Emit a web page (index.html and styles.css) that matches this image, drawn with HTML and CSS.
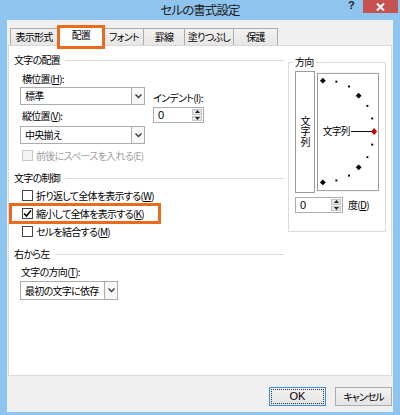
FILE: index.html
```html
<!DOCTYPE html>
<html lang="ja">
<head>
	<meta charset="UTF-8">
	<title>セルの書式設定</title>
	<link rel="stylesheet" href="styles.css">
</head>
<body>
<div class="window">
	<div class="titlebar">
		<div class="title">セルの書式設定</div>
		<div class="controls">
			<span class="help">?</span>
			<span class="close"><svg width="9" height="8" viewBox="0 0 9 8"><path d="M1 0.5 L8 7.5 M8 0.5 L1 7.5" stroke="#fff" stroke-width="2"/></svg></span>
		</div>
	</div>
	<div class="dialog">
		<ul class="tabs">
			<li class="tab t1">表示形式</li>
			<li class="tab t2 on">配置</li>
			<li class="tab t3">フォント</li>
			<li class="tab t4">罫線</li>
			<li class="tab t5">塗りつぶし</li>
			<li class="tab t6">保護</li>
		</ul>
		<div class="panel">
			<div class="left">
				<div class="group"><span>文字の配置</span></div>
				<div class="align">
					<div class="align-main">
						<div class="label">横位置(<u>H</u>):</div>
						<div class="combo"><span class="val">標準</span><span class="drop"><svg width="7" height="5" viewBox="0 0 7 5"><path d="M0.5 0.5 L3.5 3.5 L6.5 0.5" fill="none" stroke="#333" stroke-width="1.3"/></svg></span></div>
						<div class="label label2">縦位置(<u>V</u>):</div>
						<div class="combo combo2"><span class="val">中央揃え</span><span class="drop"><svg width="7" height="5" viewBox="0 0 7 5"><path d="M0.5 0.5 L3.5 3.5 L6.5 0.5" fill="none" stroke="#333" stroke-width="1.3"/></svg></span></div>
					</div>
					<div class="indent">
						<div class="label dim">インデント(I):</div>
						<div class="spin">
							<span class="val">0</span>
							<span class="arrows">
								<span class="arr"><svg width="5" height="3" viewBox="0 0 5 3"><path d="M0 3 L2.5 0 L5 3Z" fill="#222"/></svg></span>
								<span class="arr"><svg width="5" height="3" viewBox="0 0 5 3"><path d="M0 0 L2.5 3 L5 0Z" fill="#222"/></svg></span>
							</span>
						</div>
					</div>
				</div>
				<div class="check off"><span class="box"></span><span>前後にスペースを入れる(E)</span></div>

				<div class="group g2"><span>文字の制御</span></div>
				<div class="check"><span class="box"></span><span>折り返して全体を表示する(<u>W</u>)</span></div>
				<div class="check shown"><span class="box"><svg width="9" height="9" viewBox="0 0 9 9"><path d="M1 4.5 L3.5 7 L8 1.5" fill="none" stroke="#000" stroke-width="1.6"/></svg></span><span>縮小して全体を表示する(<u>K</u>)</span></div>
				<div class="check"><span class="box"></span><span>セルを結合する(<u>M</u>)</span></div>

				<div class="group g3"><span>右から左</span></div>
				<div class="label label3">文字の方向(<u>T</u>):</div>
				<div class="combo combo3"><span class="val">最初の文字に依存</span><span class="drop"><svg width="7" height="5" viewBox="0 0 7 5"><path d="M0.5 0.5 L3.5 3.5 L6.5 0.5" fill="none" stroke="#333" stroke-width="1.3"/></svg></span></div>
			</div>

			<div class="right">
				<div class="orient">
					<div class="orient-title">方向</div>
					<div class="orient-boxes">
						<div class="vtext">文字列</div>
						<svg class="dial" width="64" height="122" viewBox="0 0 64 122">
							<rect x="0.5" y="0.5" width="63" height="121" fill="#fff" stroke="#9a9a9a"/>
							<g fill="#000">
								<path d="M6 5 L9 8 L6 11 L3 8Z"/>
								<rect x="19" y="8" width="2" height="2"/>
								<rect x="32" y="13" width="2" height="2"/>
								<path d="M43 20.5 L46 23.5 L43 26.5 L40 23.5Z"/>
								<rect x="51" y="33" width="2" height="2"/>
								<rect x="56" y="46" width="2" height="2"/>
								<rect x="56" y="73" width="2" height="2"/>
								<rect x="51" y="86" width="2" height="2"/>
								<path d="M43 94.5 L46 97.5 L43 100.5 L40 97.5Z"/>
								<rect x="32" y="105" width="2" height="2"/>
								<rect x="19" y="110" width="2" height="2"/>
								<path d="M6 110 L9 113 L6 116 L3 113Z"/>
							</g>
							<text class="dial-text" x="6" y="64">文字列</text>
							<line x1="35" y1="60.5" x2="57" y2="60.5" stroke="#000"/>
							<path d="M59 57.5 L61.5 60.5 L59 63.5 L56.5 60.5Z" fill="#e00000" stroke="#900"/>
						</svg>
					</div>
					<div class="deg">
						<div class="spin spin-deg">
							<span class="val">0</span>
							<span class="arrows">
								<span class="arr"><svg width="5" height="3" viewBox="0 0 5 3"><path d="M0 3 L2.5 0 L5 3Z" fill="#222"/></svg></span>
								<span class="arr"><svg width="5" height="3" viewBox="0 0 5 3"><path d="M0 0 L2.5 3 L5 0Z" fill="#222"/></svg></span>
							</span>
						</div>
						<span class="deg-label">度(<u>D</u>)</span>
					</div>
				</div>
			</div>
		</div>
		<div class="buttons">
			<div class="btn ok">OK</div>
			<div class="btn">キャンセル</div>
		</div>
	</div>
</div>
</body>
</html>
```

FILE: styles.css
```css
* {
	margin: 0;
	padding: 0;
	box-sizing: border-box;
	list-style: none;
}
body {
	width: 400px;
	height: 415px;
	overflow: hidden;
	font-family: "Noto Sans CJK JP", "Noto Sans", sans-serif;
	font-size: 10px;
	letter-spacing: -0.7px;
	font-feature-settings: "palt";
	white-space: nowrap;
	color: #000;
}
u {
	text-decoration-thickness: 1px;
	text-underline-offset: 1px;
}
.window {
	height: 415px;
	background: #8fc4ef;
}

/* title bar */
.titlebar {
	height: 20px;
	display: grid;
	grid-template-columns: 1fr auto 1fr;
}
.title {
	grid-column: 2;
	font-size: 12.5px;
	letter-spacing: -0.9px;
	line-height: 20px;
	color: #222;
}
.controls {
	grid-column: 3;
	justify-self: end;
	display: flex;
	align-items: flex-start;
}
.help {
	font: bold 11px/11px "Liberation Sans", sans-serif;
	color: #222;
	margin-right: 9px;
}
.close {
	width: 35px;
	height: 13px;
	background: #c75050;
	margin-right: 2px;
	display: flex;
	align-items: center;
	justify-content: center;
}

/* dialog */
.dialog {
	margin: 0 7px;
	height: 392px;
	background: #f0f0f0;
	padding: 8px 1px 0;
}
.tabs {
	display: flex;
	align-items: flex-end;
	height: 17px;
	padding-left: 2px;
	position: relative;
	z-index: 1;
}
.tab {
	height: 17px;
	border: 1px solid #acacac;
	border-bottom: 0;
	margin-left: -1px;
	text-align: center;
	line-height: 16px;
	background: linear-gradient(#f2f2f2, #e6e6e6);
}
.tab:first-child { margin-left: 0; }
.t1 { width: 48px; }
.t2 { width: 48px; }
.t3 { width: 40px; }
.t4 { width: 42px; }
.t5 { width: 50px; }
.t6 { width: 45px; }
.tab.on {
	height: 20px;
	margin-bottom: -1px;
	background: #fff;
	position: relative;
}
.tab.on::after {
	content: "";
	position: absolute;
	left: -1px;
	right: -1px;
	top: -2px;
	bottom: -3px;
	border: 3px solid #ec6a1e;
}

.panel {
	height: 331px;
	border: 1px solid #d9d9d9;
	background: #fff;
	display: flex;
	gap: 4px;
	padding: 6px 5px 0;
}
.left {
	width: 270px;
}
.group {
	display: flex;
	align-items: center;
	line-height: 16px;
}
.group::after {
	content: "";
	flex: 1;
	height: 1px;
	background: #dcdcdc;
	margin-left: 5px;
}
.g2, .g3 { margin-top: 6px; }
.label {
	line-height: 16px;
	margin-left: 2px;
}
.dim { margin-left: 0; }

.align {
	display: flex;
	margin-top: 3px;
}
.align-main {
	margin-left: 6px;
	width: 125px;
}
.label2 { margin-top: 3px; }
.combo {
	height: 18px;
	border: 1px solid #acacac;
	background: #fff;
	display: flex;
	align-items: center;
}
.combo2 { margin-top: 2px; }
.combo .val {
	flex: 1;
	padding-left: 4px;
	line-height: 16px;
}
.drop {
	width: 13px;
	height: 100%;
	border-left: 1px solid #acacac;
	background: #f7f7f7;
	display: flex;
	align-items: center;
	justify-content: center;
}
.indent {
	margin-left: 8px;
	padding-top: 19px;
}
.spin {
	margin-top: 1px;
	width: 51px;
	height: 16px;
	border: 1px solid #acacac;
	background: #fff;
	display: flex;
}
.spin .val {
	flex: 1;
	padding-left: 4px;
	line-height: 14px;
	font-family: "Liberation Sans", sans-serif;
	font-size: 11px;
	letter-spacing: 0;
}
.arrows {
	width: 12px;
	display: flex;
	flex-direction: column;
	gap: 1px;
	padding: 1px;
}
.arr {
	flex: 1;
	background: #e6e6e6;
	border: 1px solid #c4c4c4;
	display: flex;
	align-items: center;
	justify-content: center;
}

.check {
	display: flex;
	align-items: center;
	gap: 3px;
	margin-left: 8px;
	height: 18px;
}
.check.off {
	margin-top: 2px;
	color: #a0a0a0;
}
.box {
	width: 11px;
	height: 11px;
	border: 1px solid #444;
	background: #fff;
	display: flex;
	align-items: center;
	justify-content: center;
}
.off .box {
	border-color: #c8c8c8;
	background: #f4f4f4;
}
.shown {
	position: relative;
}
.shown::after {
	content: "";
	position: absolute;
	left: -13px;
	width: 146px;
	top: -1px;
	bottom: -2px;
	border: 3px solid #ec6a1e;
}
.label3 {
	margin-top: 2px;
	margin-left: 7px;
}
.combo3 {
	margin-top: 1px;
	margin-left: 6px;
	width: 98px;
	height: 19px;
}

/* orientation */
.right {
	width: 98px;
	padding-top: 10px;
}
.orient {
	border: 1px solid #dcdcdc;
	height: 170px;
	padding: 0 6px;
}
.orient-title {
	display: inline-block;
	margin: -9px 0 0 -2px;
	padding: 0 2px;
	background: #fff;
	line-height: 16px;
	vertical-align: top;
}
.orient-boxes {
	display: flex;
	gap: 2px;
	margin-top: -7px;
}
.vtext {
	width: 20px;
	height: 122px;
	border: 1px solid #9a9a9a;
	display: flex;
	align-items: center;
	justify-content: center;
	writing-mode: vertical-rl;
	text-orientation: upright;
	letter-spacing: 0.5px;
	line-height: 18px;
}
.dial { display: block; }
.dial-text {
	font-size: 10px;
}
.deg {
	display: flex;
	align-items: center;
	gap: 5px;
	margin-top: 4px;
}
.spin-deg {
	margin-top: 0;
	width: 48px;
}
.deg-label { line-height: 16px; }

/* buttons */
.buttons {
	display: flex;
	justify-content: flex-end;
	gap: 9px;
	margin-top: 11px;
}
.btn {
	width: 57px;
	height: 19px;
	border: 1px solid #acacac;
	background: linear-gradient(#f2f2f2, #e4e4e4);
	text-align: center;
	line-height: 17px;
	font-size: 10px;
	letter-spacing: -1px;
}
.ok {
	border-color: #3c8fe0;
	outline: 1px dotted #333;
	outline-offset: -3px;
	font-family: "Liberation Sans", sans-serif;
	font-size: 11px;
	letter-spacing: 0;
}
```
